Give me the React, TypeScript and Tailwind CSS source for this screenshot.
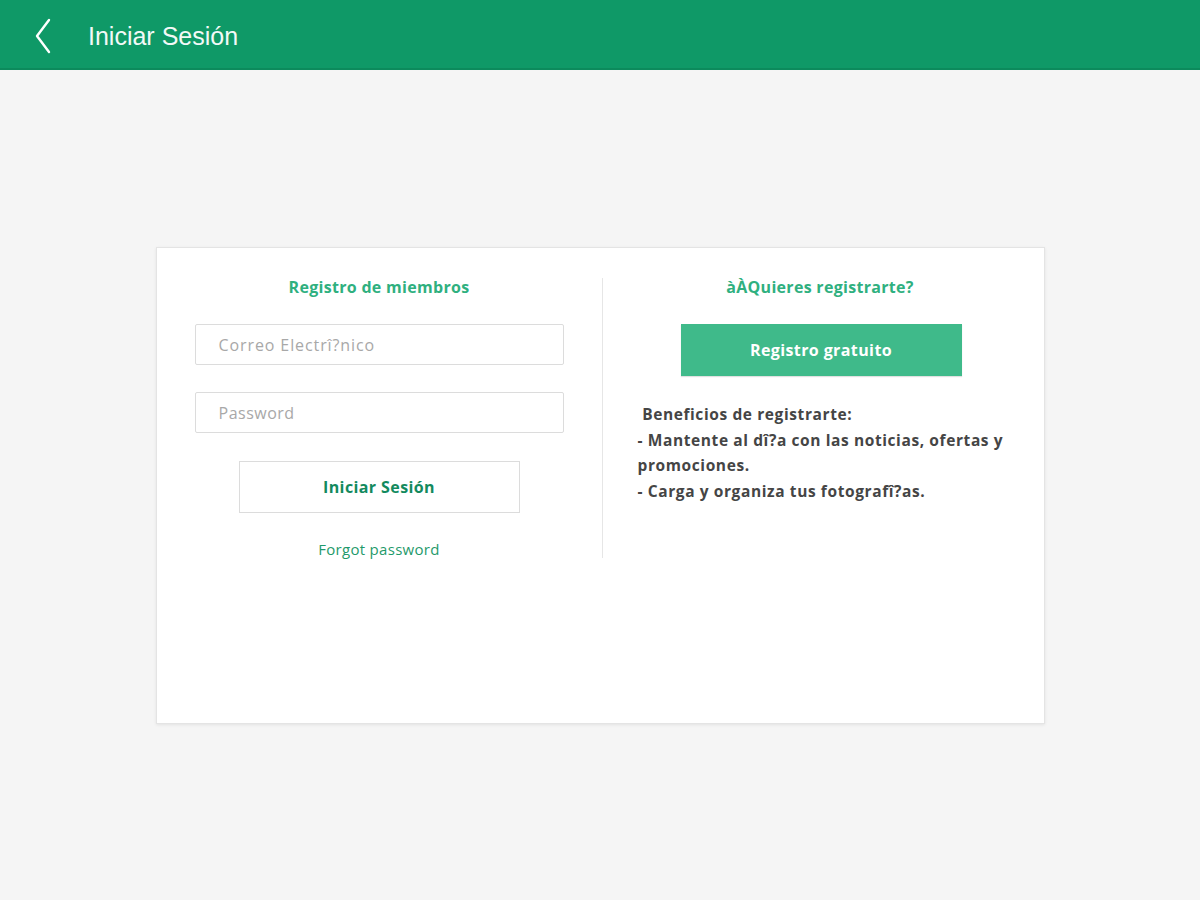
import React from "react";

export default function App() {
  const font = { fontFamily: "'Open Sans', 'Noto Sans', sans-serif" };
  return (
    <div className="w-[1200px] h-[900px] bg-[#f5f5f5] flex flex-col" style={font}>
      <header className="h-[70px] bg-[#0f9967] border-b-2 border-[#0c8a5c] flex items-center shrink-0">
        <svg width="20" height="36" viewBox="0 0 20 36" className="ml-[33px] mt-[4px]">
          <path d="M16 2 L4 18 L16 34" fill="none" stroke="#ffffff" strokeWidth="2.4" strokeLinecap="round" strokeLinejoin="round" />
        </svg>
        <span className="ml-[35px] mt-[5px] text-white text-[25px] opacity-95" style={{ fontFamily: "'Liberation Sans', Arial, sans-serif" }}>
          Iniciar Sesión
        </span>
      </header>
      <div className="flex justify-center pt-[177px]">
        <div className="w-[889px] h-[477px] bg-white border border-[#e4e4e4] shadow-[0_1px_3px_rgba(0,0,0,0.08)] flex pt-[29px]">
          <div className="w-[445px] flex flex-col items-center">
            <div className="text-[#2fb07f] text-[16px] font-bold tracking-[0.3px] h-[20px] leading-[20px]">Registro de miembros</div>
            <div className="mt-[27px] w-[369px] h-[41px] border border-[#dcdcdc] rounded-[2px] flex items-center pl-[23px] text-[#a8a8a8] text-[16px] tracking-[0.9px]">
              Correo Electrî?nico
            </div>
            <div className="mt-[27px] w-[369px] h-[41px] border border-[#dcdcdc] rounded-[2px] flex items-center pl-[23px] text-[#a8a8a8] text-[16px] tracking-[0.5px]">
              Password
            </div>
            <div className="mt-[28px] w-[281px] h-[52px] border border-[#dcdcdc] flex items-center justify-center text-[#138a5e] text-[16px] font-bold tracking-[0.4px]">
              Iniciar Sesión
            </div>
            <div className="mt-[25px] text-[#1f9a6b] text-[15px] tracking-[0.3px]">Forgot password</div>
          </div>
          <div className="w-px h-[280px] bg-[#e6e6e6] mt-[1px]" />
          <div className="flex-1 flex flex-col">
            <div className="self-center text-[#2fb07f] text-[16px] font-bold tracking-[0.3px] h-[20px] leading-[20px] ml-[-6px]">àÀQuieres registrarte?</div>
            <div className="self-center ml-[-4px] mt-[27px] w-[281px] h-[52px] bg-[#3fba8a] flex items-center justify-center text-white text-[16px] font-bold tracking-[0.4px] shadow-[0_1px_1px_rgba(0,0,0,0.12)]">
              Registro gratuito
            </div>
            <div className="mt-[26px] ml-[35px] text-[#454545] text-[15.5px] font-bold leading-[25.5px] tracking-[0.6px]">
              <div>&nbsp;Beneficios de registrarte:</div>
              <div>- Mantente al dî?a con las noticias, ofertas y</div>
              <div>promociones.</div>
              <div>- Carga y organiza tus fotografî?as.</div>
            </div>
          </div>
        </div>
      </div>
    </div>
  );
}
